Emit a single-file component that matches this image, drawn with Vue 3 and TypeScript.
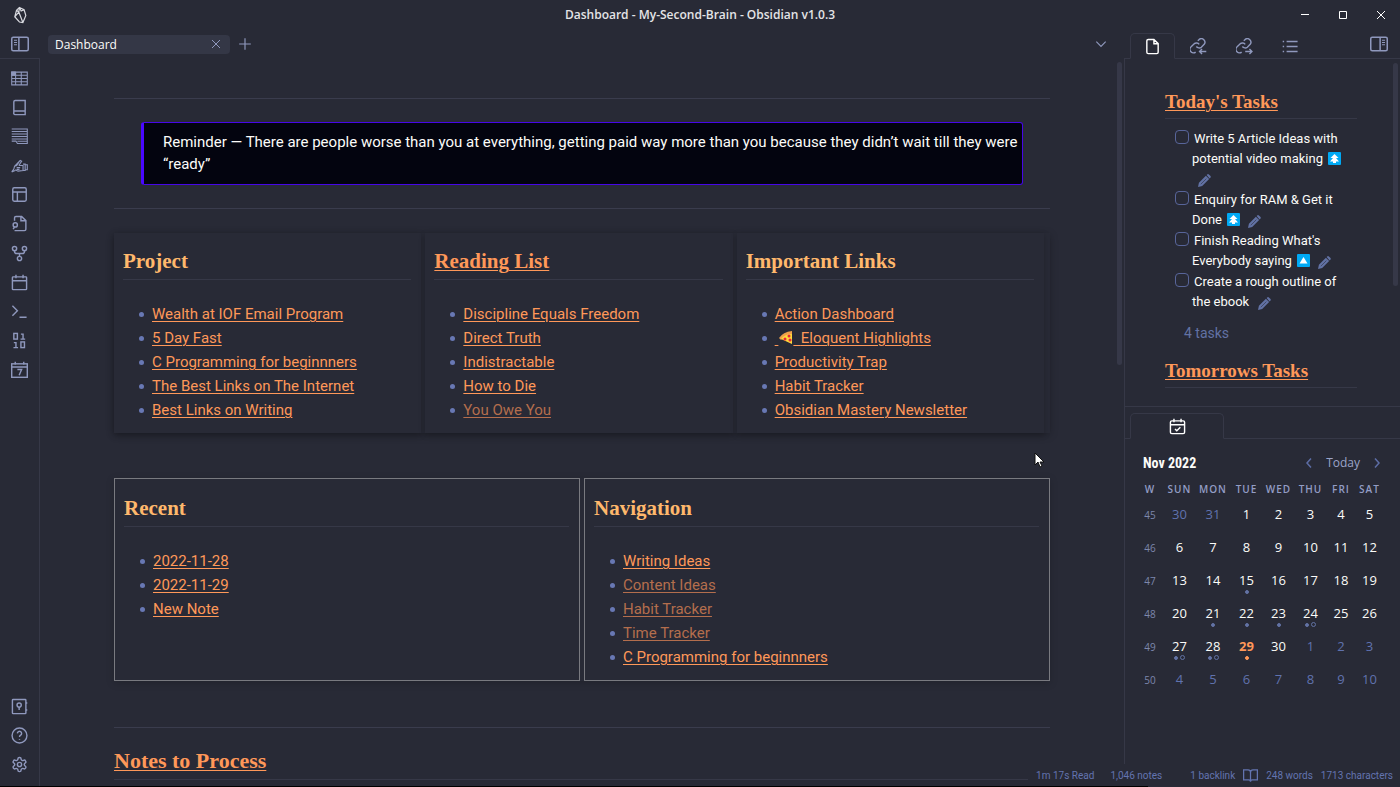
<script setup lang="ts">
interface NoteLink { text: string; faded?: boolean; pizza?: boolean }
interface Card { title: string; linked?: boolean; links: NoteLink[] }
interface Task { text: string; priority?: 'highest' | 'medium' }
interface Day { n: number; other?: boolean; today?: boolean; dots?: string[] }

const icons: Record<string, string> = {
  panelLeft: '<rect x="1" y="3" width="22" height="18" rx="2"/><path d="M10.500 3v18"/><path d="M4 7h4M4 10h4M4 13h4" stroke-width="1.500"/>',
  panelRight: '<rect x="1" y="3" width="22" height="18" rx="2"/><path d="M13.500 3v18"/><path d="M16 7h4M16 10h4M16 13h4" stroke-width="1.500"/>',
  table: '<g stroke-width="1.500"><path d="M1 3h22v18H1zM1 7.500h22M1 12h22M1 16.500h22M6.500 3v18M14.500 3v18"/><path d="M1 3h5v4.500H1z" fill="currentColor"/></g>',
  book: '<path d="M4 19V4a2 2 0 0 1 2-2h14v20H6a2 2 0 0 1-2-3zM4.500 17H20"/>',
  lines: '<g stroke-width="1.500"><path d="M1 1.500h22v20.500H9l-2-3.500H1M1 5h22M1 8.500h22M1 12h22M1 15.500h22M9 18.700h14"/></g>',
  hand: '<g stroke-width="1.600"><path d="M1 21l3-4 1-4 8-8 2 1-4 6M5 13l3-1 4-6M11 12h6v7l-7 1-4-2M8 15h5M8 17.500h4M1 21l5-2M17 10h3v9h-3M20 11h3v7h-3"/></g>',
  layout: '<rect x="2.500" y="2.500" width="19" height="19" rx="2"/><path d="M2.500 8.500h19M9 8.500v13"/>',
  fileSearch: '<path d="M5 8V4a2 2 0 0 1 2-2h8l6 6v12a2 2 0 0 1-2 2H5M14 2v6h6M3 20l2-3"/><circle cx="6" cy="14" r="3"/>',
  fork: '<circle cx="5" cy="5" r="3"/><circle cx="19" cy="5" r="3"/><circle cx="12" cy="19" r="3"/><path d="M5 8v1a3 3 0 0 0 3 3h8a3 3 0 0 0 3-3V8M12 12v4"/>',
  calendar: '<rect x="2" y="4" width="20" height="18" rx="1"/><path d="M7 1v5M17 1v5M2 9.500h20"/>',
  terminal: '<path d="M2 4l7 7-7 7M12 20h10"/>',
  binary: '<rect x="4" y="2" width="5" height="8"/><rect x="14" y="14" width="5" height="8"/><path d="M14 3h3v7M13.500 10H20M4 15h3v7M3.500 22H10"/>',
  calendar7: '<rect x="1" y="4" width="22" height="19"/><path d="M6 1v4M18 1v4M1 8.500h22M9 12h6l-3.500 8"/>',
  vault: '<rect x="2" y="2" width="19" height="20" rx="1"/><circle cx="11.500" cy="10" r="3"/><path d="M11.500 13v4M21 7h2M21 17h2"/>',
  help: '<circle cx="12" cy="12" r="10.500"/><path d="M9 9a3 3 0 1 1 4.500 2.600C12.300 12.300 12 13 12 14M12 17v1"/>',
  gear: '<path d="M12.200 2h-.4a2 2 0 0 0-2 2v.2a2 2 0 0 1-1 1.700l-.4.300a2 2 0 0 1-2 0l-.2-.1a2 2 0 0 0-2.700.7l-.2.400a2 2 0 0 0 .7 2.700l.2.100a2 2 0 0 1 1 1.700v.5a2 2 0 0 1-1 1.800l-.2.100a2 2 0 0 0-.7 2.700l.2.400a2 2 0 0 0 2.700.7l.2-.1a2 2 0 0 1 2 0l.4.300a2 2 0 0 1 1 1.700v.2a2 2 0 0 0 2 2h.4a2 2 0 0 0 2-2v-.2a2 2 0 0 1 1-1.700l.4-.3a2 2 0 0 1 2 0l.2.100a2 2 0 0 0 2.700-.7l.2-.4a2 2 0 0 0-.7-2.700l-.2-.1a2 2 0 0 1-1-1.800v-.5a2 2 0 0 1 1-1.700l.2-.1a2 2 0 0 0 .7-2.700l-.2-.4a2 2 0 0 0-2.700-.7l-.2.100a2 2 0 0 1-2 0l-.4-.3a2 2 0 0 1-1-1.700V4a2 2 0 0 0-2-2z"/><circle cx="12" cy="12" r="3"/>',
  close: '<path d="M4 4l16 16M20 4L4 20"/>',
  plus: '<path d="M12 2v20M2 12h20"/>',
  down: '<path d="M4 8l8 8 8-8"/>',
  left: '<path d="M16 3l-8 9 8 9" stroke-width="3"/>',
  right: '<path d="M8 3l8 9-8 9" stroke-width="3"/>',
  file: '<path d="M14 2H6a2 2 0 0 0-2 2v16a2 2 0 0 0 2 2h12a2 2 0 0 0 2-2V8zM14 2v6h6"/>',
  linkIn: '<path d="M9 12a5 5 0 0 0 7 1l4-4a5 5 0 0 0-7-7l-2 2M13 9a5 5 0 0 0-7-1l-4 4a5 5 0 0 0 6 8M23 19h-9M17 15.500L13.500 19l3.500 3.500"/>',
  linkOut: '<path d="M9 12a5 5 0 0 0 7 1l4-4a5 5 0 0 0-7-7l-2 2M13 9a5 5 0 0 0-7-1l-4 4a5 5 0 0 0 6 8M13 19h9M19 15.500l3.500 3.500-3.500 3.500"/>',
  list: '<path d="M6.500 5H22M6.500 12H22M6.500 19H22M1 5h2M1 12h2M1 19h2"/>',
  calCheck: '<rect x="2" y="4" width="20" height="18" rx="2"/><path d="M7 1v5M17 1v5M2 9.500h20M8.500 15.500l2.500 2.500 5-5"/>',
  openBook: '<path d="M1 3h7a4 4 0 0 1 4 4v15a3 3 0 0 0-3-3H1zM23 3h-7a4 4 0 0 0-4 4v15a3 3 0 0 1 3-3h8z"/>',
}

const ribbonTop = [
  ['table', 'Table'], ['book', 'Book'], ['lines', 'Notes'], ['hand', 'Review'], ['layout', 'Workspace'],
  ['fileSearch', 'Quick switcher'], ['fork', 'Graph view'], ['calendar', 'Calendar'],
  ['terminal', 'Command palette'], ['binary', 'Random note'], ['calendar7', 'Daily note'],
]
const ribbonBottom = [['vault', 'Open vault'], ['help', 'Help'], ['gear', 'Settings']]
const sideTabs = [['linkIn', 'Backlinks'], ['linkOut', 'Outgoing links'], ['list', 'Outline']]

const topCards: Card[] = [
  { title: 'Project', links: [
    { text: 'Wealth at IOF Email Program' }, { text: '5 Day Fast' }, { text: 'C Programming for beginnners' },
    { text: 'The Best Links on The Internet' }, { text: 'Best Links on Writing' }] },
  { title: 'Reading List', linked: true, links: [
    { text: 'Discipline Equals Freedom' }, { text: 'Direct Truth' }, { text: 'Indistractable' },
    { text: 'How to Die' }, { text: 'You Owe You', faded: true }] },
  { title: 'Important Links', links: [
    { text: 'Action Dashboard' }, { text: 'Eloquent Highlights', pizza: true }, { text: 'Productivity Trap' },
    { text: 'Habit Tracker' }, { text: 'Obsidian Mastery Newsletter' }] },
]
const bottomCards: Card[] = [
  { title: 'Recent', links: [{ text: '2022-11-28' }, { text: '2022-11-29' }, { text: 'New Note' }] },
  { title: 'Navigation', links: [
    { text: 'Writing Ideas' }, { text: 'Content Ideas', faded: true }, { text: 'Habit Tracker', faded: true },
    { text: 'Time Tracker', faded: true }, { text: 'C Programming for beginnners' }] },
]

const tasks: Task[] = [
  { text: 'Write 5 Article Ideas with potential video making', priority: 'highest' },
  { text: 'Enquiry for RAM & Get it Done', priority: 'highest' },
  { text: "Finish Reading What's Everybody saying", priority: 'medium' },
  { text: 'Create a rough outline of the ebook' },
]

const dotMap: Record<number, string[]> = {
  15: ['full'], 21: ['full'], 22: ['full'], 23: ['full'], 24: ['full', 'ring'],
  27: ['full', 'ring'], 28: ['full', 'ring'], 29: ['full'],
}
const weekdays = ['SUN', 'MON', 'TUE', 'WED', 'THU', 'FRI', 'SAT']
const weeks = Array.from({ length: 6 }, (_, w) => ({
  number: 45 + w,
  days: Array.from({ length: 7 }, (_, d): Day => {
    const n = w * 7 + d - 1
    if (n < 1) return { n: n + 31, other: true }
    if (n > 30) return { n: n - 30, other: true }
    return { n, today: n === 29, dots: dotMap[n] }
  }),
}))
</script>

<template>
  <div class="app">
    <header class="titlebar">
      <svg class="logo" viewBox="0 0 24 30" aria-hidden="true">
        <path d="M11 2l8 4 3 10-5 12-6-1-8-9 3-11zM11 2l-1 8 7 18M6 7l4 3-7 8M11 2l3 6 5-2" />
      </svg>
      <h1>Dashboard - My-Second-Brain - Obsidian v1.0.3</h1>
      <div class="window-controls">
        <button aria-label="Minimize"><svg viewBox="0 0 10 10"><path d="M1 4.500h8" /></svg></button>
        <button aria-label="Maximize"><svg viewBox="0 0 10 10"><path d="M1.500 1.500h7v7h-7z" /></svg></button>
        <button aria-label="Close"><svg viewBox="0 0 10 10"><path d="M1 1l8 8M9 1L1 9" /></svg></button>
      </div>
    </header>

    <div class="workspace">
      <nav class="ribbon" aria-label="Ribbon">
        <div class="ribbon-head">
          <button aria-label="Toggle left sidebar"><svg class="icon wide" viewBox="0 0 24 24" v-html="icons.panelLeft" /></button>
        </div>
        <div class="ribbon-body">
          <div class="ribbon-actions">
            <button v-for="[name, label] in ribbonTop" :key="name" :aria-label="label">
              <svg class="icon" viewBox="0 0 24 24" v-html="icons[name]" />
            </button>
          </div>
          <div class="ribbon-system">
            <button v-for="[name, label] in ribbonBottom" :key="name" :aria-label="label">
              <svg class="icon" viewBox="0 0 24 24" v-html="icons[name]" />
            </button>
          </div>
        </div>
      </nav>

      <main class="main">
        <div class="tabs">
          <div class="tab">
            <span>Dashboard</span>
            <button aria-label="Close tab"><svg class="icon small" viewBox="0 0 24 24" v-html="icons.close" /></button>
          </div>
          <button aria-label="New tab"><svg class="icon medium" viewBox="0 0 24 24" v-html="icons.plus" /></button>
          <button class="tab-list" aria-label="Tab list"><svg class="icon medium" viewBox="0 0 24 24" v-html="icons.down" /></button>
        </div>

        <div class="note">
          <hr>
          <blockquote>Reminder — There are people worse than you at everything, getting paid way more than you because they didn’t wait till they were “ready”</blockquote>
          <hr>
          <div class="cards shadowed">
            <section v-for="card in topCards" :key="card.title" class="card">
              <h2><a v-if="card.linked" href="#">{{ card.title }}</a><template v-else>{{ card.title }}</template></h2>
              <ul>
                <li v-for="link in card.links" :key="link.text">
                  <a href="#" :class="{ faded: link.faded }"><template v-if="link.pizza">&nbsp;<svg class="pizza" viewBox="0 0 15 15" aria-label="pizza"><path d="M1 8Q5 2 14 1v4Q7 5 3 10z" fill="#f0a04b" /><path d="M3 9Q7 4 14 4v10z" fill="#ffd83b" /><circle cx="11" cy="6" r="1.500" fill="#e8253b" /><circle cx="7" cy="9" r="1.500" fill="#e8253b" /><circle cx="12" cy="10" r="1.500" fill="#e8253b" /></svg>&nbsp; </template>{{ link.text }}</a>
                </li>
              </ul>
            </section>
          </div>
          <div class="cards outlined">
            <section v-for="card in bottomCards" :key="card.title" class="card">
              <h2>{{ card.title }}</h2>
              <ul>
                <li v-for="link in card.links" :key="link.text">
                  <a href="#" :class="{ faded: link.faded }">{{ link.text }}</a>
                </li>
              </ul>
            </section>
          </div>
          <hr>
          <h2 class="process"><a href="#">Notes to Process</a></h2>
        </div>
        <div class="thumb main-thumb" />
      </main>

      <aside class="sidebar">
        <div class="side-tabs">
          <button class="side-tab active" aria-label="Tasks"><svg class="icon" viewBox="0 0 24 24" v-html="icons.file" /></button>
          <button v-for="[name, label] in sideTabs" :key="name" class="side-tab" :aria-label="label">
            <svg class="icon" viewBox="0 0 24 24" v-html="icons[name]" />
          </button>
          <button class="toggle-right" aria-label="Toggle right sidebar"><svg class="icon wide" viewBox="0 0 24 24" v-html="icons.panelRight" /></button>
        </div>

        <section class="tasks">
          <h3><a href="#">Today's Tasks</a></h3>
          <ul>
            <li v-for="(task, i) in tasks" :key="i">
              <input :id="`task-${i}`" type="checkbox">
              <label :for="`task-${i}`">{{ task.text }}</label>{{ ' ' }}
              <svg v-if="task.priority" class="priority" viewBox="0 0 13 13" :aria-label="task.priority">
                <rect width="13" height="13" rx="1" fill="#00a9f4" />
                <path v-if="task.priority === 'highest'" d="M6.500 2L10.500 6H8l3 3.500H8V11H5V9.500H2L5 6H2.500z" fill="#fff" />
                <path v-else d="M6.500 3l4 6.500h-8z" fill="#fff" />
              </svg>
              <button class="edit" aria-label="Edit task">
                <svg viewBox="0 0 14 14"><path d="M0 14l1-4.500L8.500 2 12 5.500 4.500 13zM9.300 1.200l1-1Q11-.2 12 .8l1.200 1.200q1 1 .3 1.800l-1 1z" fill="currentColor" /><path d="M3 11l6-6" stroke="#282a36" stroke-width=".6" /></svg>
              </button>
            </li>
          </ul>
          <p>4 tasks</p>
          <h3><a href="#">Tomorrows Tasks</a></h3>
          <div class="thumb side-thumb" />
        </section>

        <div class="side-tabs lower">
          <button class="side-tab active" aria-label="Calendar"><svg class="icon" viewBox="0 0 24 24" v-html="icons.calCheck" /></button>
        </div>

        <section class="calendar">
          <div class="calendar-nav">
            <h3>Nov 2022</h3>
            <button aria-label="Previous month"><svg class="icon small" viewBox="0 0 24 24" v-html="icons.left" /></button>
            <button class="today-button">Today</button>
            <button aria-label="Next month"><svg class="icon small" viewBox="0 0 24 24" v-html="icons.right" /></button>
          </div>
          <table>
            <thead>
              <tr><th>W</th><th v-for="day in weekdays" :key="day">{{ day }}</th></tr>
            </thead>
            <tbody>
              <tr v-for="week in weeks" :key="week.number">
                <td class="week">{{ week.number }}</td>
                <td v-for="day in week.days" :key="day.n" :class="{ other: day.other, today: day.today }">
                  {{ day.n }}
                  <div class="dots"><i v-for="dot in day.dots" :key="dot" :class="dot" /></div>
                </td>
              </tr>
            </tbody>
          </table>
        </section>
      </aside>
    </div>

    <footer class="status">
      <span>1m 17s Read</span>
      <span class="notes">1,046 notes</span>
      <span class="backlink">1 backlink</span>
      <svg class="icon" viewBox="0 0 24 24" v-html="icons.openBook" />
      <span>248 words</span>
      <span>1713 characters</span>
    </footer>
    <svg class="cursor" viewBox="0 0 12 16" aria-hidden="true"><path d="M1 1v12l3-3 2 5 2-1-2-4h4z" fill="#fff" stroke="#111" /></svg>
  </div>
</template>

<style>
body { margin: 0; background: #282a36; }
</style>

<style scoped>
.app {
  --line: #363847;
  --muted: #6272a4;
  --soft: #8f98bd;
  position: relative;
  display: flex;
  flex-direction: column;
  height: 100vh;
  overflow: hidden;
  background: #282a36;
  color: #fcfcf9;
  font-family: "Open Sans", "Noto Sans", sans-serif;
  font-size: 12px;
}
.app::after {
  content: "";
  position: absolute;
  bottom: 0;
  left: 0;
  width: 82%;
  height: 1px;
  background: #000;
}
* { box-sizing: border-box; }
button {
  display: flex;
  align-items: center;
  justify-content: center;
  padding: 0;
  border: 0;
  background: none;
  color: var(--soft);
  font: inherit;
}
ul { margin: 0; padding: 0; list-style: none; }
h1, h2, h3, p { margin: 0; }
.icon { display: block; width: 17px; height: 17px; fill: none; stroke: currentColor; stroke-width: 2; }
.icon.wide { width: 18px; height: 18px; }
.icon.small { width: 12px; height: 12px; }
.icon.medium { width: 14px; height: 14px; }

.titlebar { display: grid; grid-template-columns: 1fr auto 1fr; align-items: center; height: 29px; flex: none; }
.logo { width: 14px; height: 18px; margin-left: 13px; fill: none; stroke: #d8d9df; stroke-width: 2; }
.titlebar h1 { font-size: 12px; line-height: 18px; font-weight: 600; color: #e4e4e6; }
.window-controls { display: flex; justify-content: flex-end; }
.window-controls button { width: 38px; height: 28px; color: #fff; }
.window-controls svg { width: 10px; height: 10px; fill: none; stroke: currentColor; }

.workspace { display: flex; flex: 1; min-height: 0; }
.ribbon { display: flex; flex-direction: column; width: 40px; flex: none; }
.ribbon-head { display: flex; justify-content: center; align-items: center; height: 30px; border-bottom: 1px solid var(--line); }
.ribbon-body {
  display: flex;
  flex: 1;
  flex-direction: column;
  justify-content: space-between;
  padding: 6px 0 8px;
  border-right: 1px solid var(--line);
}
.ribbon-actions { display: flex; flex-direction: column; justify-content: space-between; height: 318px; }
.ribbon-actions button { height: 26px; }
.ribbon-system button, .ribbon-actions button { width: 100%; }
.ribbon-system button { height: 29px; }

.main { position: relative; display: flex; flex: 1; flex-direction: column; min-width: 0; overflow: hidden; }
.tabs { display: flex; align-items: center; height: 30px; padding: 0 16px 0 8px; flex: none; }
.tab {
  display: flex;
  align-items: center;
  justify-content: space-between;
  width: 182px;
  height: 19px;
  margin-right: 8px;
  padding: 0 8px 0 7px;
  border-radius: 4px;
  background: #343746;
}
.tab-list { margin-left: auto; }

.note { padding: 39px 74px 0; font-family: Roboto, sans-serif; font-size: 15px; }
hr { height: 1px; margin: 0; border: 0; background: #3a3c4d; }
blockquote {
  margin: 23px 27px;
  padding: 8px 0 9px 19px;
  border: 1px solid #4607e8;
  border-left: 3px solid #4a08ff;
  border-radius: 3px;
  background: #03040f;
  line-height: 22px;
}
.cards { display: grid; gap: 4px; }
.shadowed { grid-template-columns: repeat(3, 1fr); margin-top: 24px; padding-right: 6px; box-shadow: 0 2px 8px rgb(0 0 0 / 22%); }
.shadowed .card { padding: 14px 10px 11px 9px; box-shadow: 0 2px 6px rgb(0 0 0 / 22%); }
.outlined { grid-template-columns: repeat(2, 1fr); margin: 45px 0 46px; box-shadow: 0 2px 8px rgb(0 0 0 / 18%); }
.outlined .card { padding: 15px 10px 11px 9px; border: 1px solid #797a80; }
.card, .outlined { background: #282a36; }
h2 {
  padding-bottom: 4px;
  border-bottom: 1px solid var(--line);
  color: #ffb86c;
  font: bold 21px/28px "Liberation Serif", serif;
}
a { color: #ff9859; text-decoration: underline; text-underline-offset: 2px; text-decoration-thickness: 1px; }
a.faded { color: #b46e4d; }
.card ul { margin-top: 22px; }
.card li { display: flex; align-items: center; padding-left: 16px; line-height: 24px; }
.card li::before { content: ""; width: 5px; height: 5px; margin-right: 8px; border-radius: 50%; background: #6878b4; }
.pizza { width: 15px; height: 15px; vertical-align: -2px; }
.process { margin-top: 19px; font-size: 22px; }
.thumb { position: absolute; width: 5px; border-radius: 3px; background: #363848; }
.main-thumb { top: 33px; right: 2px; height: 40%; }

.sidebar { display: flex; flex-direction: column; width: 276px; flex: none; }
.side-tabs { display: flex; align-items: flex-end; height: 30px; padding-left: 6px; flex: none; box-shadow: inset 1px -1px var(--line); background: #282a36; }
.side-tabs:first-child { box-shadow: inset 0 -1px var(--line); }
.side-tab { width: 46px; height: 25px; }
.side-tab.active {
  width: 45px;
  height: 26px;
  border: 1px solid var(--line);
  border-bottom-color: #282a36;
  border-radius: 5px 5px 0 0;
  color: #fff;
}
.toggle-right { width: 18px; height: 30px; margin: 0 12px 0 auto; }
.tasks {
  position: relative;
  height: 348px;
  padding: 29px 43px 0 40px;
  border-bottom: 1px solid var(--line);
  border-left: 1px solid var(--line);
  font: 13px/20px Roboto, sans-serif;
}
.tasks h3 { padding-bottom: 3px; border-bottom: 1px solid var(--line); font: bold 19px/27px "Liberation Serif", serif; }
.tasks ul { padding: 10px 0 10px 10px; }
.tasks li { padding: 0 0 1px 17px; }
.tasks input {
  width: 14px;
  height: 14px;
  margin: 0 2px 0 -17px;
  border: 1px solid #58659a;
  border-radius: 4px;
  appearance: none;
  vertical-align: -1px;
}
.priority { width: 13px; height: 13px; margin: 0 2px; vertical-align: -2px; }
.edit { display: inline-flex; width: 13px; height: 13px; margin: 0 6px; color: #6272a4; vertical-align: -4px; }
.edit svg { width: 13px; height: 13px; }
.tasks label { margin-left: 3px; }
.tasks p { margin: 0 0 14px 19px; color: var(--muted); font-size: 14px; }
.side-thumb { top: 4px; right: 2px; height: 223px; }
.lower { height: 32px; }
.lower .side-tab.active { width: 94px; }
.calendar { flex: 1; margin-bottom: 23px; padding: 9px 17px 0 11px; border-left: 1px solid var(--line); }
.calendar-nav { display: flex; align-items: center; height: 29px; padding-left: 7px; }
.calendar-nav h3 { margin-right: auto; font: bold 14px/22px "Roboto Condensed", "Liberation Sans Narrow", "Open Sans Condensed", Roboto, sans-serif; }
.calendar-nav .icon { color: #5d6da5; }
.today-button { margin: 0 11px; color: #9ba4c9; }
table { width: 100%; table-layout: fixed; border-collapse: collapse; text-align: center; }
th { height: 23px; padding: 0; color: #939dc5; font-size: 10px; font-weight: 600; letter-spacing: 1px; }
th:nth-child(1) { width: 28px; }
th:nth-child(2) { width: 31px; }
th:nth-child(3) { width: 36px; }
th:nth-child(4) { width: 31px; }
th:nth-child(5) { width: 33px; }
th:nth-child(6) { width: 31px; }
th:nth-child(7) { width: 30px; }
td { height: 33px; padding: 5px 0 0; font-size: 13px; line-height: 18px; vertical-align: top; }
td.week { color: #7d87ad; font-size: 10px; line-height: 20px; }
td.other { color: #6072ae; }
td.today { color: #ff9859; font-weight: bold; }
.dots { display: flex; align-items: center; justify-content: center; gap: 2px; height: 5px; color: #6272a4; }
.today .dots { color: #ff9859; }
.dots i { width: 5px; height: 5px; border: 1px solid currentColor; border-radius: 50%; }
.dots .full { width: 4px; height: 4px; background: currentColor; }

.status {
  position: absolute;
  right: 0;
  bottom: 1px;
  display: flex;
  align-items: center;
  gap: 8px;
  height: 21px;
  padding: 0 7px 0 8px;
  background: #282a36;
  color: #6374b0;
  font-family: Roboto, sans-serif;
  font-size: 10px;
}
.status .icon { width: 15px; height: 15px; stroke-width: 2; }
.notes { margin-left: 8px; }
.backlink { margin-left: 20px; }
.cursor { position: absolute; top: 452px; left: 1034px; width: 12px; height: 16px; }
</style>
